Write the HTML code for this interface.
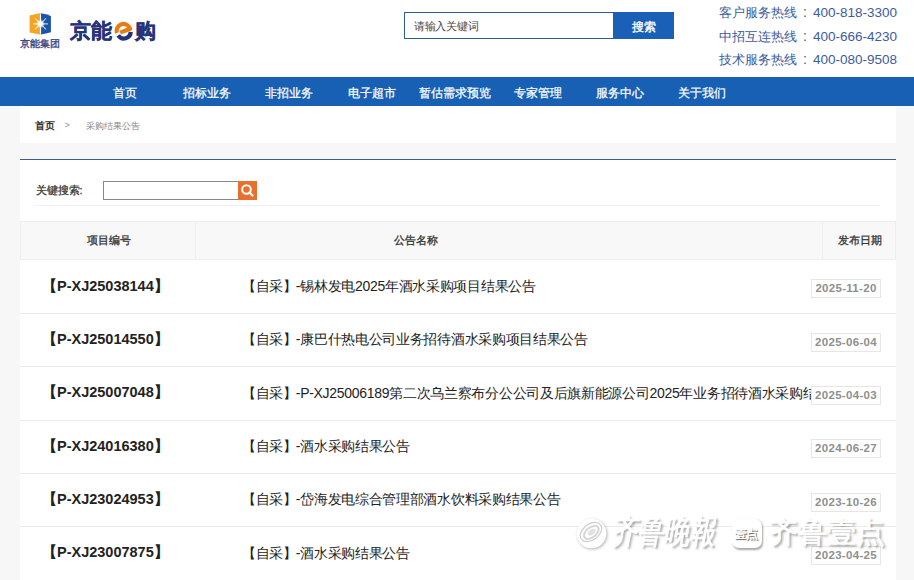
<!DOCTYPE html>
<html><head><meta charset="utf-8">
<style>
*{margin:0;padding:0;box-sizing:border-box}
html,body{width:914px;height:580px;overflow:hidden}
body{background:#f7f7f7;font-family:"Liberation Sans",sans-serif;position:relative;color:#333}
.abs{position:absolute}
#hdr{left:0;top:0;width:914px;height:77px;background:#fff}
#nav{left:0;top:77px;width:914px;height:29px;background:#1760b4}
.nv{position:absolute;top:77px;height:29px;line-height:32px;color:#fff;font-size:12.3px;-webkit-text-stroke:0.25px #fff;width:100px;text-align:center;white-space:nowrap}
.hot{position:absolute;left:719px;color:#3d5c9b;font-size:13.5px;white-space:nowrap;line-height:16px}
#bc{left:20px;top:106px;width:876px;height:37px;background:#fff}
#ct{left:20px;top:159px;width:876px;height:430px;background:#fff;border-top:1px solid #3b5f80}
.th{position:absolute;top:221px;height:39px;background:#f8f8f8;border:1px solid #eeeeee;}
.tht{position:absolute;top:221px;height:39px;font-size:11px;-webkit-text-stroke:0.3px #333;line-height:39px;color:#333;white-space:nowrap}
.sep{position:absolute;left:20px;width:876px;height:1px;background:#ececec}
.code{position:absolute;left:42px;font-size:14.5px;font-weight:bold;color:#222;white-space:nowrap}
.ttl{position:absolute;left:242px;width:620px;overflow:hidden;font-size:14px;letter-spacing:-0.3px;color:#222;white-space:nowrap}
.dt{position:absolute;left:811px;width:70px;height:19px;border:1px solid #e6e6e6;background:#fff;font-size:11.5px;font-weight:bold;color:#8f8f8f;text-align:center;line-height:17px;letter-spacing:0.3px}
.rb{margin-right:-1px}
</style></head><body>
<div id="hdr" class="abs"></div>
<svg class="abs" style="left:26px;top:10px" width="28" height="28" viewBox="26 10 28 28">
  <defs><radialGradient id="g1" cx="0.5" cy="0.5" r="0.5"><stop offset="0" stop-color="#fff"/><stop offset="0.45" stop-color="#fff" stop-opacity="0.9"/><stop offset="1" stop-color="#fff" stop-opacity="0"/></radialGradient></defs>
  <path d="M29.6 15.6 Q35 14 40.2 13.3 L40.2 34.4 Q35 33.6 29.6 32.6 Z" fill="#f4a524"/>
  <path d="M40.8 13.3 Q46 14 50.9 16 L50.9 32.3 Q46 33.5 40.8 34.4 Z" fill="#1a56a8"/>
  <g stroke="#fff" stroke-linecap="round">
    <line x1="33.5" y1="23.8" x2="47.5" y2="23.8" stroke-width="1.3" opacity="0.7"/>
    <line x1="35.3" y1="18.6" x2="45.7" y2="29" stroke-width="1.1" opacity="0.65"/>
    <line x1="45.7" y1="18.6" x2="35.3" y2="29" stroke-width="1.1" opacity="0.65"/>
    <line x1="40.5" y1="15" x2="40.5" y2="33" stroke-width="1.2" opacity="0.9"/>
  </g>
  <circle cx="40.5" cy="23.8" r="4.5" fill="url(#g1)"/>
</svg>
<div class="abs" style="left:20px;top:37px;font-size:10.3px;color:#3b4782;white-space:nowrap;-webkit-text-stroke:0.35px #3b4782">京能集团</div>
<div class="abs" style="left:70px;top:16.5px;font-size:20.8px;font-weight:bold;color:#26347c;white-space:nowrap;-webkit-text-stroke:0.35px #26347c">京能<span style="display:inline-block;width:23px"></span>购</div>
<svg class="abs" style="left:110px;top:18px" width="28" height="24" viewBox="0 0 28 24">
  <path d="M6.9 15 A6.8 6.8 0 1 1 20.1 10.8 L10.2 14.6" fill="none" stroke="#ec7a14" stroke-width="4.2" stroke-linejoin="round"/>
  <path d="M8.2 17.4 A6.8 6.8 0 0 0 20.7 13.9" fill="none" stroke="#22317a" stroke-width="4.2"/>
</svg>
<div class="abs" style="left:404px;top:12px;width:210px;height:27px;border:1px solid #2b5c99;background:#fff"></div>
<div class="abs" style="left:414px;top:18.5px;font-size:11px;color:#444;letter-spacing:-0.3px;white-space:nowrap">请输入关键词</div>
<div class="abs" style="left:613px;top:12px;width:61px;height:27px;background:#1a60b6;color:#fff;font-size:12px;-webkit-text-stroke:0.35px #fff;text-align:center;line-height:30px">搜索</div>
<div class="hot" style="top:4px"><span style="font-size:13px">客户服务热线</span><span style="display:inline-block;width:16px;text-align:center;font-size:14px">:</span>400-818-3300</div>
<div class="hot" style="top:27.5px"><span style="font-size:13px">中招互连热线</span><span style="display:inline-block;width:16px;text-align:center;font-size:14px">:</span>400-666-4230</div>
<div class="hot" style="top:51px"><span style="font-size:13px">技术服务热线</span><span style="display:inline-block;width:16px;text-align:center;font-size:14px">:</span>400-080-9508</div>
<div id="nav" class="abs"></div>
<div class="nv" style="left:75.0px">首页</div>
<div class="nv" style="left:157.3px">招标业务</div>
<div class="nv" style="left:239.3px">非招业务</div>
<div class="nv" style="left:321.9px">电子超市</div>
<div class="nv" style="left:404.9px">暂估需求预览</div>
<div class="nv" style="left:487.7px">专家管理</div>
<div class="nv" style="left:569.5px">服务中心</div>
<div class="nv" style="left:652.4px">关于我们</div>
<div id="bc" class="abs"></div>
<div class="abs" style="left:35px;top:119px;font-size:10px;font-weight:bold;color:#333;white-space:nowrap">首页</div>
<div class="abs" style="left:64.5px;top:120px;font-size:9px;color:#8090b0;white-space:nowrap">&gt;</div>
<div class="abs" style="left:86px;top:120px;font-size:9px;color:#888;white-space:nowrap">采购结果公告</div>
<div id="ct" class="abs"></div>
<div class="abs" style="left:35.5px;top:183px;font-size:11px;color:#333;white-space:nowrap;-webkit-text-stroke:0.25px #333">关键搜索:</div>
<div class="abs" style="left:103px;top:181px;width:136px;height:19px;border:1px solid #888;background:#fff"></div>
<div class="abs" style="left:238px;top:181px;width:19px;height:19px;background:#e9702c"></div>
<svg class="abs" style="left:238px;top:181px" width="19" height="19" viewBox="0 0 19 19">
  <circle cx="8.5" cy="8.5" r="4.3" fill="none" stroke="#fff" stroke-width="2"/>
  <line x1="11.5" y1="11.5" x2="14.5" y2="14.5" stroke="#fff" stroke-width="2.4" stroke-linecap="round"/>
</svg>
<div class="abs" style="left:34px;top:205px;width:846px;height:1px;background:#f2f2f2"></div>
<div class="th" style="left:20px;width:176px"></div>
<div class="th" style="left:195px;width:628px"></div>
<div class="th" style="left:822px;width:74px"></div>
<div class="tht" style="left:87px">项目编号</div>
<div class="tht" style="left:394px">公告名称</div>
<div class="tht" style="left:838px">发布日期</div>
<div class="sep" style="top:312.87px"></div>
<div class="code" style="top:276.50px">【P-XJ25038144】</div>
<div class="ttl" style="top:277.80px">【自采<span class="rb">】</span>-锡林发电2025年酒水采购项目结果公告</div>
<div class="dt" style="top:279.20px">2025-11-20</div>
<div class="sep" style="top:366.24px"></div>
<div class="code" style="top:329.87px">【P-XJ25014550】</div>
<div class="ttl" style="top:331.17px">【自采<span class="rb">】</span>-康巴什热电公司业务招待酒水采购项目结果公告</div>
<div class="dt" style="top:332.57px">2025-06-04</div>
<div class="sep" style="top:419.61px"></div>
<div class="code" style="top:383.24px">【P-XJ25007048】</div>
<div class="ttl" style="top:384.54px">【自采<span class="rb">】</span>-P-XJ25006189第二次乌兰察布分公公司及后旗新能源公司2025年业务招待酒水采购结果公告</div>
<div class="dt" style="top:385.94px">2025-04-03</div>
<div class="sep" style="top:472.98px"></div>
<div class="code" style="top:436.61px">【P-XJ24016380】</div>
<div class="ttl" style="top:437.91px">【自采<span class="rb">】</span>-酒水采购结果公告</div>
<div class="dt" style="top:439.31px">2024-06-27</div>
<div class="sep" style="top:526.35px"></div>
<div class="code" style="top:489.98px">【P-XJ23024953】</div>
<div class="ttl" style="top:491.28px">【自采<span class="rb">】</span>-岱海发电综合管理部酒水饮料采购结果公告</div>
<div class="dt" style="top:492.68px">2023-10-26</div>
<div class="sep" style="top:579.72px"></div>
<div class="code" style="top:543.35px">【P-XJ23007875】</div>
<div class="ttl" style="top:544.65px">【自采<span class="rb">】</span>-酒水采购结果公告</div>
<div class="dt" style="top:546.05px">2023-04-25</div>
<div class="abs" style="left:896px;top:106px;width:18px;height:474px;background:#f7f7f7"></div>
<svg class="abs" style="left:570px;top:510px;filter:drop-shadow(1px 1.5px 1.5px rgba(0,0,0,0.3))" width="45" height="45" viewBox="0 0 45 45">
  <circle cx="21.5" cy="23.5" r="14.8" fill="#fff"/>
  <g transform="rotate(-38 21 22)">
    <ellipse cx="21" cy="22" rx="12" ry="8" fill="none" stroke="#cfcfcf" stroke-width="1.2"/>
    <ellipse cx="21" cy="22.5" rx="8.5" ry="5" fill="none" stroke="#d6d6d6" stroke-width="2"/>
    <ellipse cx="21.5" cy="22.5" rx="4.5" ry="2.6" fill="#e2e2e2"/>
  </g>
</svg>
<div class="abs" style="left:611px;top:514px;font-size:26px;font-style:italic;color:#fff;white-space:nowrap;letter-spacing:0px;transform:scaleY(1.3);transform-origin:0 50%;-webkit-text-stroke:0.6px #fff;text-shadow:1.5px 2px 2px rgba(0,0,0,0.4)">齐鲁晚報</div>
<div class="abs" style="left:732px;top:519px;width:30px;height:29px;border-radius:7px;background:#fff;box-shadow:1px 1.5px 2px rgba(0,0,0,0.35)"></div>
<div class="abs" style="left:735px;top:526px;font-size:12px;font-weight:bold;color:#fff;white-space:nowrap;letter-spacing:-1px;text-shadow:0.5px 0.5px 0.8px rgba(0,0,0,0.6)">壹点</div>
<div class="abs" style="left:769px;top:513px;font-size:29px;color:#fff;white-space:nowrap;-webkit-text-stroke:0.8px #fff;text-shadow:1.5px 2px 2.5px rgba(0,0,0,0.45)">齐鲁壹点</div>
</body></html>
